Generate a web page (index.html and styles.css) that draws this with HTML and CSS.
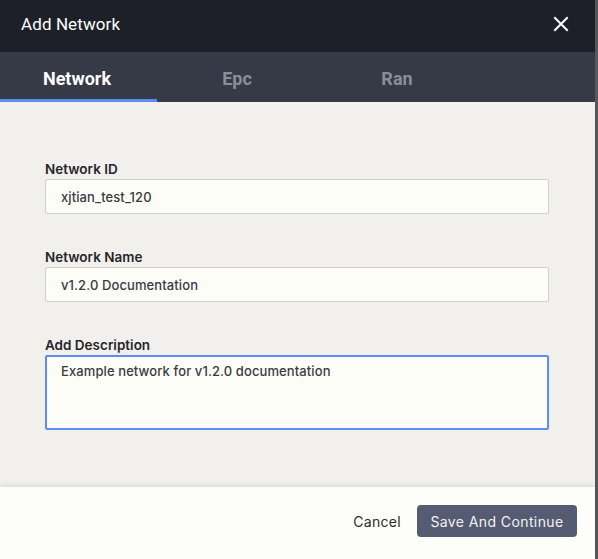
FILE: index.html
```html
<!DOCTYPE html>
<html>
<head>
<meta charset="utf-8">
<link rel="stylesheet" href="styles.css">
</head>
<body>
<div class="dialog">
  <header class="dialog-header">
    <span class="dialog-title">Add Network</span>
    <button class="close-btn" aria-label="Close">
      <svg width="16" height="16" viewBox="0 0 16 16"><path d="M2 2L14 14M14 2L2 14" stroke="#ffffff" stroke-width="2" stroke-linecap="square"/></svg>
    </button>
  </header>
  <nav class="tabs">
    <div class="tab active">Network</div>
    <div class="tab">Epc</div>
    <div class="tab">Ran</div>
  </nav>
  <main class="content">
    <div class="field">
      <label class="field-label">Network ID</label>
      <div class="input">xjtian_test_120</div>
    </div>
    <div class="field">
      <label class="field-label">Network Name</label>
      <div class="input">v1.2.0 Documentation</div>
    </div>
    <div class="field">
      <label class="field-label">Add Description</label>
      <div class="input textarea">Example network for v1.2.0 documentation</div>
    </div>
  </main>
  <footer class="dialog-footer">
    <button class="btn-cancel">Cancel</button>
    <button class="btn-primary">Save And Continue</button>
  </footer>
</div>
</body>
</html>
```

FILE: styles.css
```css
* { box-sizing: border-box; }
html, body { margin: 0; padding: 0; }
body {
  background: #56575a;
  width: 598px;
  height: 559px;
  overflow: hidden;
  font-family: Inter, "Noto Sans", sans-serif;
}
.dialog {
  width: 595px;
  height: 559px;
  display: flex;
  flex-direction: column;
  background: #f1f0ec;
}
.dialog-header {
  height: 52px;
  flex: none;
  background: #1e2029;
  display: flex;
  align-items: center;
  justify-content: space-between;
  padding: 0 26px 4px 21px;
}
.dialog-title {
  font-family: Roboto, sans-serif;
  font-size: 17px;
  color: #ffffff;
  letter-spacing: 0.1px;
}
.close-btn {
  background: none;
  border: 0;
  padding: 0;
  width: 16px;
  height: 16px;
  display: flex;
}
.tabs {
  height: 50px;
  flex: none;
  background: #363a46;
  display: flex;
}
.tab {
  width: 160px;
  padding: 2px 6px 0 0;
  display: flex;
  align-items: center;
  justify-content: center;
  font-family: Roboto, sans-serif;
  font-weight: 700;
  font-size: 18px;
  color: #8b8e97;
  position: relative;
}
.tab.active { color: #ffffff; }
.tab.active::after {
  content: "";
  position: absolute;
  left: 0;
  bottom: 0;
  width: 157px;
  height: 3px;
  background: #5d8cf6;
}
.content {
  flex: 1;
  padding: 59px 46px 0 45px;
  display: flex;
  flex-direction: column;
  gap: 35px;
}
.field {
  display: flex;
  flex-direction: column;
  gap: 1px;
}
.field-label {
  font-size: 13.5px;
  font-weight: 600;
  color: #25262b;
  line-height: 17px;
}
.input {
  height: 35px;
  background: #fdfdf8;
  border: 1px solid #cfcfcb;
  border-radius: 2px;
  padding: 0 15px;
  display: flex;
  align-items: center;
  font-size: 13px;
  font-weight: 500;
  color: #3a3b42;
  letter-spacing: 0.1px;
}
.input.textarea {
  height: 75px;
  align-items: flex-start;
  padding: 6px 14px;
  border: 2px solid #5d8cf6;
  line-height: 16px;
}
.dialog-footer {
  height: 72px;
  flex: none;
  background: #fdfef9;
  box-shadow: 0 -2px 5px rgba(0,0,0,0.08);
  display: flex;
  align-items: center;
  justify-content: flex-end;
  gap: 16px;
  padding: 0 18px 4px 0;
  position: relative;
}
.btn-cancel {
  background: none;
  border: 0;
  padding: 0;
  font-family: Inter, sans-serif;
  font-size: 14px;
  color: #2a2b30;
  letter-spacing: 0.3px;
}
.btn-primary {
  width: 160px;
  height: 32px;
  background: #545b72;
  border: 0;
  border-radius: 4px;
  color: #f2f2f2;
  font-family: Inter, sans-serif;
  font-size: 14px;
  letter-spacing: 0.4px;
}
```
